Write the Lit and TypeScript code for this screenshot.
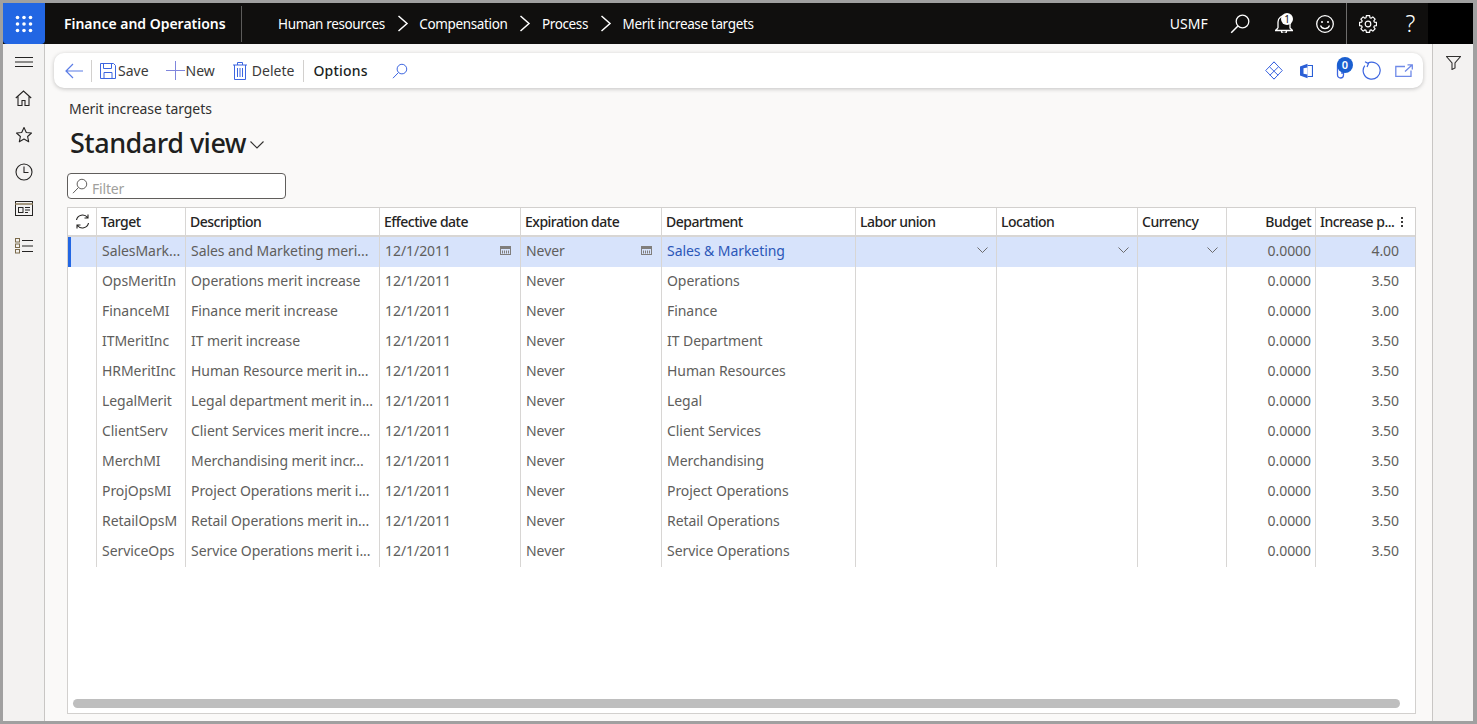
import { LitElement, html, css, svg } from "lit";
import { customElement } from "lit/decorators.js";

const rows = [
  ["SalesMark...", "Sales and Marketing meri...", "Sales & Marketing", "4.00"],
  ["OpsMeritIn", "Operations merit increase", "Operations", "3.50"],
  ["FinanceMI", "Finance merit increase", "Finance", "3.00"],
  ["ITMeritInc", "IT merit increase", "IT Department", "3.50"],
  ["HRMeritInc", "Human Resource merit in...", "Human Resources", "3.50"],
  ["LegalMerit", "Legal department merit in...", "Legal", "3.50"],
  ["ClientServ", "Client Services merit incre...", "Client Services", "3.50"],
  ["MerchMI", "Merchandising merit incr...", "Merchandising", "3.50"],
  ["ProjOpsMI", "Project Operations merit i...", "Project Operations", "3.50"],
  ["RetailOpsM", "Retail Operations merit in...", "Retail Operations", "3.50"],
  ["ServiceOps", "Service Operations merit i...", "Service Operations", "3.50"],
];

const ic = (w: number, h: number, body: unknown, cls = "") =>
  html`<svg class=${cls} width=${w} height=${h} viewBox="0 0 ${w} ${h}" fill="none" stroke="currentColor">${body}</svg>`;

const search = (s: number) => ic(s, s, svg`<circle cx=${s * 0.62} cy=${s * 0.38} r=${s * 0.3}/><path d="M${s * 0.4} ${s * 0.6} L${s * 0.06} ${s * 0.95}"/>`);
const cal = ic(11, 9, svg`<rect x=".5" y=".5" width="10" height="8" stroke="#807e7c"/><path d="M0 2h11" stroke="#807e7c" stroke-width="2"/><path d="M2.500 4.500v3M4.500 4.500v3M6.500 4.500v3M8.500 4.500v3" stroke="#807e7c"/>`, "cal");
const chev = ic(11, 6, svg`<path d="M.5.500l5 5 5-5" stroke-width=".9"/>`, "chev");
const viewChev = ic(14, 8, svg`<path d="M.5.500l6.500 6.500L13.500.5" stroke-width="1.100"/>`);
const crumb = ic(12, 17, svg`<path d="M1.500 1l8.500 7.500L1.500 16" stroke-width="1.500"/>`);

const gearPath = (() => {
  const c = 9, pts: string[] = [];
  for (let i = 0; i < 8; i++) {
    const a = (i * Math.PI) / 4;
    for (const [da, r] of [[-0.3, 6.6], [-0.19, 8.6], [0.19, 8.6], [0.3, 6.6]] as const) {
      pts.push(`${(c + r * Math.sin(a + da)).toFixed(2)} ${(c - r * Math.cos(a + da)).toFixed(2)}`);
    }
  }
  return `M${pts.join("L")}z`;
})();

@customElement("app-root")
export class AppRoot extends LitElement {
  static styles = css`
    :host { display: block; width: 1477px; height: 724px; background: #a0a0a0; padding: 3px 4px 3px 3px; box-sizing: border-box; font-family: "Noto Sans", "Open Sans", sans-serif; overflow: hidden; }
    svg { display: block; flex: none; }
    .frame { height: 100%; display: flex; flex-direction: column; background: #faf9f8; }
    .top { height: 41px; flex: none; background: #100f0e; color: #fff; display: flex; align-items: center; font-size: 14px; }
    .waffle { width: 42px; height: 41px; background: #2266e3; border-radius: 0 0 4px 4px; display: grid; place-items: center; flex: none; }
    .app { width: 197px; box-sizing: border-box; padding-left: 19px; font-weight: 600; font-size: 14px; letter-spacing: -.02px; height: 36px; display: flex; align-items: center; border-right: 1px solid #5c5b5a; flex: none; white-space: nowrap; }
    .crumbs { display: flex; align-items: center; margin-left: 36px; flex: 1; letter-spacing: -.36px; white-space: nowrap; font-size: 13.5px; }
    .crumbs svg { margin: 0 10.5px 0 12px; }
    .usmf { margin-right: 22px; letter-spacing: .1px; }
    .ti { color: #fff; display: grid; place-items: center; position: relative; flex: none; }
    .s1 { width: 20px; margin-right: 25px; }
    .s2 { width: 18px; margin-right: 23px; }
    .s3 { width: 18px; margin-right: 12px; }
    .vs { width: 1px; height: 41px; background: #6e6d6c; margin-right: 12px; flex: none; }
    .s4 { width: 18px; margin-right: 28px; }
    .q { font-size: 23px; font-weight: 300; width: 11px; margin-right: 12px; line-height: 1; display: flex; justify-content: center; }
    .end { width: 45px; height: 41px; background: #000; flex: none; }
    .bell-b { position: absolute; right: 0; top: -1px; width: 12px; height: 12px; border-radius: 50%; background: #fff; color: #100f0e; font-size: 10px; line-height: 12px; text-align: center; }
    .body { flex: 1; display: flex; min-height: 0; }
    .rail { width: 41px; flex: none; background: #f3f2f1; border-right: 1px solid #c8c6c4; display: flex; flex-direction: column; align-items: center; padding-top: 12px; color: #252423; }
    .slot { height: 37px; display: grid; place-items: center; width: 100%; }
    .slot.first { height: 12px; margin-bottom: 11px; }
    .main { flex: 1; min-width: 0; display: flex; flex-direction: column; padding: 9px 9px 7px 9px; }
    .bar { height: 35px; flex: none; background: #fff; border-radius: 10px; box-shadow: 0 1px 4px rgba(0,0,0,.22); display: flex; align-items: center; font-size: 14px; color: #201f1e; padding: 0 10px 0 11px; }
    .b { display: flex; align-items: center; color: #3b3a39; white-space: nowrap; }
    .sep { width: 1px; height: 22px; background: #d2d0ce; flex: none; }
    .blue { color: #3c65e0; }
    .peri { color: #6f8ae8; }
    .back { color: #5b7de6; }
    .sep1 { margin: 0 8px; }
    .sep2 { margin: 0 9px; }
    .save-i { margin-right: 2px; }
    .new { margin-left: 17px; }
    .new-i { margin-right: 1px; }
    .del { margin-left: 18px; }
    .del-i { margin-right: 5px; }
    .opts { color: #201f1e; font-weight: 500; letter-spacing: .2px; }
    .find { margin-left: 24px; }
    .diamond { margin-right: 16px; }
    .office { margin-right: 23px; color: #2a5fd6; }
    .clip { position: relative; width: 17px; margin-right: 9px; }
    .refresh { margin-right: 14px; }
    .spacer { flex: 1; }
    .title { font-size: 14px; letter-spacing: -.05px; color: #323130; margin: 12px 0 0 15px; line-height: 18px; white-space: nowrap; }
    .view { display: flex; align-items: center; margin: 4px 0 0 16px; height: 40px; font-size: 27px; font-weight: 500; letter-spacing: -.5px; color: #201f1e; white-space: nowrap; }
    .view svg { margin: 6px 0 0 4px; color: #323130; }
    .filter { width: 219px; height: 26px; box-sizing: border-box; border: 1px solid #605e5c; border-radius: 4px; margin: 11px 0 0 13px; background: #fff; display: flex; align-items: center; padding-left: 4px; color: #a19f9d; font-size: 14px; letter-spacing: -.2px; flex: none; }
    .filter svg { color: #605e5c; margin-right: 4px; }
    .filter span { padding-top: 5px; }
    .grid { flex: 1; margin: 8px 7px 0 13px; background: #fff; border: 1px solid #d2d0ce; position: relative; min-height: 0; font-size: 14px; }
    .row { display: grid; grid-template-columns: 29px 89px 194px 141px 141px 194px 141px 141px 89px 89px 99px; height: 30px; color: #605e5c; }
    .row > div { box-sizing: border-box; border-right: 1px solid #d8d6d4; display: flex; align-items: center; padding: 0 4px 4px 5px; letter-spacing: -.06px; white-space: nowrap; overflow: hidden; position: relative; min-width: 0; }
    .row > div:last-child { border-right: 0; }
    .row > .r { justify-content: flex-end; padding-right: 4px; }
    .row > .inc { justify-content: flex-end; padding-right: 16px; }
    .row > .c { padding-right: 0; justify-content: space-between; }
    .row.head { height: 29px; box-sizing: border-box; border-bottom: 2px solid #d8d6d4; color: #252423; font-weight: 500; }
    .row.head > div { padding: 0 4px 0 4px; letter-spacing: -.5px; }
    .row.head > .inc { justify-content: space-between; padding-right: 12px; }
    .row.head > .sync { padding: 0; justify-content: center; }
    .sel { background: #d7e3fb; position: relative; }
    .sel::before { content: ""; position: absolute; left: 0; top: 0; width: 3px; height: 30px; background: #2266e3; z-index: 1; }
    .row .link { color: #2b57b8; }
    .cal { margin-right: 9px; }
    .row > .dd { justify-content: flex-end; }
    .dd svg { color: #605e5c; margin-right: 4px; }
    .dots { display: flex; flex-direction: column; gap: 2px; }
    .dots i { width: 2px; height: 2px; background: #3b3a39; display: block; }
    .scroll { position: absolute; left: 5px; width: 1327px; bottom: 5px; height: 9px; border-radius: 5px; background: #bebebe; }
    .side { width: 40px; flex: none; background: #f3f2f1; border-left: 1px solid #c8c6c4; display: flex; justify-content: center; padding-top: 12px; color: #323130; }
    .ab { position: absolute; left: 1px; top: -5px; width: 16px; height: 16px; background: #1a5fd0; border-radius: 50%; color: #fff; font-size: 11px; font-weight: 600; line-height: 16px; text-align: center; }
  `;

  render() {
    return html`<div class="frame">
      <div class="top">
        <div class="waffle">${ic(18, 18, svg`<g fill="#fff" stroke="none">${[0, 6.5, 13].flatMap((x) => [0, 6.5, 13].map((y) => svg`<circle cx=${x + 2.5} cy=${y + 2.5} r="1.8"/>`))}</g>`)}</div>
        <div class="app">Finance and Operations</div>
        <div class="crumbs">
          <span>Human resources</span>${crumb}
          <span>Compensation</span>${crumb}
          <span>Process</span>${crumb}
          <span>Merit increase targets</span>
        </div>
        <span class="usmf">USMF</span>
        <div class="ti s1">${ic(20, 20, svg`<circle cx="12.500" cy="7.500" r="6.300" stroke-width="1.300"/><path d="M8 12L1.200 18.800" stroke-width="1.500"/>`)}</div>
        <div class="ti s2">${ic(18, 19, svg`<path d="M3 14V8a6 6 0 0 1 7.500-5.800M15 9v5l2.500 2.500H.5L3 14M6.500 17a2.500 2.500 0 0 0 5 0" stroke-width="1.300"/>`)}<span class="bell-b">1</span></div>
        <div class="ti s3">${ic(18, 18, svg`<circle cx="9" cy="9" r="8.300" stroke-width="1.300"/><circle cx="6" cy="7" r="1" fill="#fff" stroke="none"/><circle cx="12" cy="7" r="1" fill="#fff" stroke="none"/><path d="M4.500 10.500a4.800 4.800 0 0 0 9 0" stroke-width="1.300"/>`)}</div>
        <div class="vs"></div>
        <div class="ti s4">${ic(18, 18, svg`<circle cx="9" cy="9" r="2.800" stroke-width="1.200"/><path d=${gearPath} stroke-width="1.200" stroke-linejoin="round"/>`)}</div>
        <div class="q">?</div>
        <div class="end"></div>
      </div>
      <div class="body">
        <div class="rail">
          <div class="slot first">${ic(18, 10, svg`<path d="M0 .5h18M0 5h18M0 9.500h18" stroke-width="1"/>`)}</div>
          <div class="slot">${ic(17, 16, svg`<path d="M.8 8L8.500 1 16.200 8M3 6.500V15.500h4v-5h3v5h4V6.500" stroke-width="1.100"/>`)}</div>
          <div class="slot">${ic(18, 17, svg`<path d="M9 1.500l2.300 5 5.200.5-3.900 3.500 1.100 5.300L9 13.100l-4.700 2.700 1.100-5.300L1.500 7l5.200-.5z" stroke-width="1.100" stroke-linejoin="round"/>`)}</div>
          <div class="slot">${ic(18, 18, svg`<circle cx="9" cy="9" r="8" stroke-width="1.100"/><path d="M9 3.500V9.500h4.500" stroke-width="1.100"/>`)}</div>
          <div class="slot">${ic(18, 15, svg`<rect x=".5" y=".5" width="17" height="14" stroke-width="1"/><path d="M0 3h18" stroke="#8a7a5a" stroke-width="1.500"/><rect x="3.500" y="6.500" width="4.500" height="5" stroke-width="1"/><path d="M10 6.500h5M10 9h5M10 11.500h3" stroke-width="1"/>`)}</div>
          <div class="slot">${ic(18, 16, svg`<rect x=".5" y=".5" width="4" height="3.500" stroke="#7a6a4a"/><rect x=".5" y="6" width="4" height="3.500" stroke="#7a6a4a"/><rect x=".5" y="11.500" width="4" height="3.500" stroke="#7a6a4a"/><path d="M7 2.500h11M7 8h11M7 13.500h11"/>`)}</div>
        </div>
        <div class="main">
          <div class="bar">
            <span class="back">${ic(18, 16, svg`<path d="M1 8h17M8 1L1 8l7 7" stroke-width="1.200"/>`)}</span>
            <div class="sep sep1"></div>
            <div class="b"><span class="blue save-i">${ic(16, 16, svg`<path d="M.5.500h13l2 2v13H.5zM3.500.5v5h8v-5M4 15.500v-6h8v6"/>`)}</span>Save</div>
            <div class="b new"><span class="new-i">${ic(19, 19, svg`<path d="M9.500 0v19M0 9.500h19" stroke="#7f86dc"/>`)}</span>New</div>
            <div class="b del"><span class="blue del-i">${ic(14, 18, svg`<path d="M0 3h14M4.500 3V.5h5V3M1.500 3v14.500h11V3M4.500 6v9M7 6v9M9.500 6v9"/>`)}</span>Delete</div>
            <div class="sep sep2"></div>
            <div class="b opts">Options</div>
            <span class="blue find">${search(16)}</span>
            <div class="spacer"></div>
            <span class="blue diamond">${ic(18, 19, svg`<path d="M6.500 3.500L9 .9l8.300 8.600L9 18.100l-2.500-2.600M11.500 3.500L9 .9.700 9.500 9 18.100l2.500-2.600M4.500 5.800l8.700 8.500M13.500 5.800l-8.700 8.500"/>`)}</span>
            <span class="office">${ic(14, 16, svg`<path d="M1 3.500L8.500.8V15.200L1 12.500z" fill="currentColor" stroke="none"/><path d="M4.500 5.200L8.500 4.500V11.500L4.500 10.800z" fill="#fff" stroke="none"/><path d="M8.500 2.500h5v11h-5" stroke-width="1.200"/>`)}</span>
            <span class="blue clip">${ic(9, 17, svg`<path d="M7.500 5v8a3 3 0 0 1-6 0V3a2.200 2.200 0 0 1 4.500 0v9" stroke-width="1.300"/>`)}<span class="ab">0</span></span>
            <span class="blue refresh">${ic(19, 19, svg`<path d="M5.500 2.200A8.500 8.500 0 1 1 2.800 4.600M3 .8l3.500 1.800L5 6" stroke-width="1.200"/>`)}</span>
            <span class="peri">${ic(18, 13, svg`<path d="M10 2.500H.8V12.300H16V6.500M10 7.500l7-6.500M12.500.8H17.300V5.500" stroke-width="1.300"/>`)}</span>
          </div>
          <div class="title">Merit increase targets</div>
          <div class="view">Standard view ${viewChev}</div>
          <div class="filter">${search(16)}<span>Filter</span></div>
          <div class="grid">
            <div class="row head">
              <div class="sync">${ic(15, 15, svg`<path d="M1.500 6a6.200 6.200 0 0 1 11-2.500M13.500 9a6.200 6.200 0 0 1-11 2.500M13 .5v3.500H9.500M2 14.500V11h3.500" stroke="#252423" stroke-width="1.100"/>`)}</div>
              <div>Target</div><div>Description</div><div>Effective date</div><div>Expiration date</div>
              <div>Department</div><div>Labor union</div><div>Location</div><div>Currency</div>
              <div class="r">Budget</div>
              <div class="inc">Increase p...<span class="dots"><i></i><i></i><i></i></span></div>
            </div>
            ${rows.map((r, i) => html`<div class="row ${i === 0 ? "sel" : ""}">
              <div></div><div>${r[0]}</div><div>${r[1]}</div>
              <div class="c">12/1/2011${i === 0 ? cal : ""}</div>
              <div class="c">Never${i === 0 ? cal : ""}</div>
              <div class="c ${i === 0 ? "link" : ""}">${r[2]}</div>
              <div class="dd">${i === 0 ? chev : ""}</div><div class="dd">${i === 0 ? chev : ""}</div><div class="dd">${i === 0 ? chev : ""}</div>
              <div class="r">0.0000</div><div class="inc">${r[3]}</div>
            </div>`)}
            <div class="scroll"></div>
          </div>
        </div>
        <div class="side">${ic(15, 14, svg`<path d="M.5.500h14L9 7v5l-3 1.500V7z" stroke-width="1.100"/>`)}</div>
      </div>
    </div>`;
  }
}
